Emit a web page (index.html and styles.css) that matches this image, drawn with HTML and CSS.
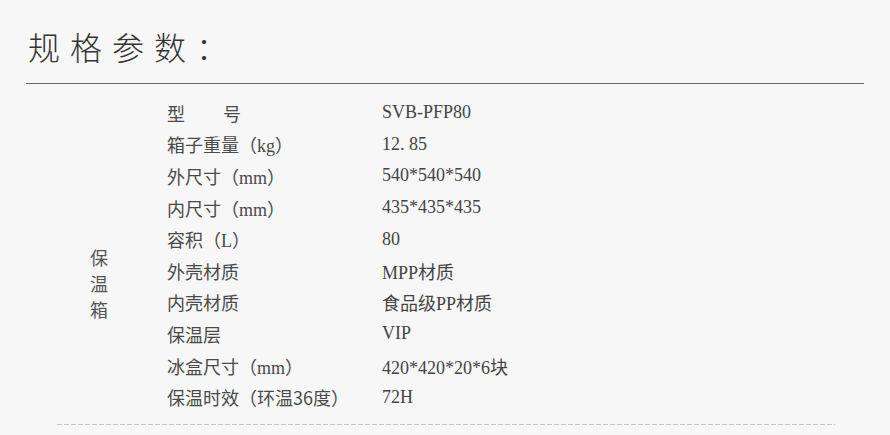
FILE: index.html
```html
<!DOCTYPE html>
<html lang="zh-CN">
<head>
<meta charset="utf-8">
<link rel="stylesheet" href="styles.css">
</head>
<body>
<div class="page">
  <h1 class="title">规格参数：</h1>
  <div class="rule"></div>
  <div class="spec">
    <div class="group">保<br>温<br>箱</div>
    <div class="rows">
      <div class="label"><span class="gap">型</span>号</div><div class="value">SVB-PFP80</div>
      <div class="label">箱子重量（<span class="lat">kg</span>）</div><div class="value">12.&nbsp;85</div>
      <div class="label">外尺寸（<span class="lat">mm</span>）</div><div class="value">540*540*540</div>
      <div class="label">内尺寸（<span class="lat">mm</span>）</div><div class="value">435*435*435</div>
      <div class="label">容积（<span class="lat">L</span>）</div><div class="value">80</div>
      <div class="label">外壳材质</div><div class="value">MPP材质</div>
      <div class="label">内壳材质</div><div class="value">食品级PP材质</div>
      <div class="label">保温层</div><div class="value">VIP</div>
      <div class="label">冰盒尺寸（<span class="lat">mm</span>）</div><div class="value">420*420*20*6块</div>
      <div class="label">保温时效（环温36度）</div><div class="value">72H</div>
    </div>
  </div>
  <div class="dash"></div>
</div>
</body>
</html>
```

FILE: styles.css
```css
html, body {
  margin: 0;
  padding: 0;
  background: #f7f7f7;
}

.page {
  width: 890px;
  height: 435px;
  overflow: hidden;
  font-family: "Noto Sans CJK SC", "Noto Sans", sans-serif;
  color: #4a4a4a;
}

.title {
  margin: 0;
  padding: 29px 0 0 28px;
  font-size: 32px;
  line-height: 34px;
  font-weight: 300;
  letter-spacing: 10px;
  color: #333;
  height: 53px;
  box-sizing: border-box;
}

.rule {
  margin: 0 26px 0 26px;
  height: 1px;
  background: #666;
  margin-top: 30px;
}

.spec {
  display: flex;
  margin-top: 13px;
}

.group {
  width: 77px;
  padding-left: 90px;
  padding-top: 147px;
  font-size: 18px;
  line-height: 26px;
  color: #555;
}

.rows {
  display: grid;
  grid-template-columns: 215px 1fr;
  grid-auto-rows: 31.6px;
  align-items: center;
  font-size: 18px;
}

.label {
  color: #4a4a4a;
  white-space: nowrap;
}

.gap {
  display: inline-block;
  width: 56px;
}

.lat, .value {
  font-family: "Liberation Serif", "Noto Sans CJK SC", serif;
}

.value {
  color: #444;
  font-size: 18px;
  white-space: nowrap;
}

.dash {
  margin: 11px 55px 0 57px;
  height: 1px;
  background: repeating-linear-gradient(90deg, #c4c4c4 0 5px, transparent 5px 7px);
}
```
